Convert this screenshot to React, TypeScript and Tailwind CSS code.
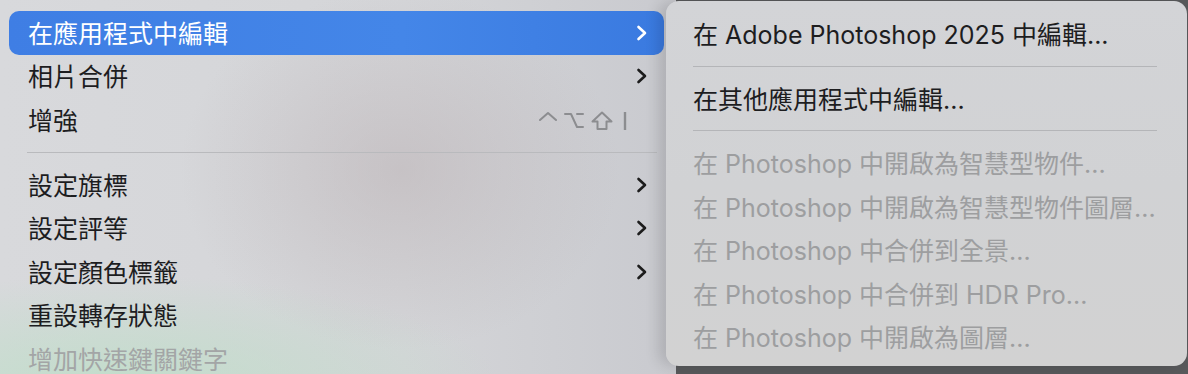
import React from "react";

const font = { fontFamily: 'Inter, "Noto Sans CJK TC", sans-serif' };

type Item = { label: string; sub?: boolean; shortcut?: boolean; disabled?: boolean; active?: boolean; sep?: boolean };

const mainItems: Item[] = [
  { label: "在應用程式中編輯", sub: true, active: true },
  { label: "相片合併", sub: true },
  { label: "增強", shortcut: true },
  { label: "", sep: true },
  { label: "設定旗標", sub: true },
  { label: "設定評等", sub: true },
  { label: "設定顏色標籤", sub: true },
  { label: "重設轉存狀態" },
  { label: "增加快速鍵關鍵字", disabled: true },
];

const subItems: Item[] = [
  { label: "在 Adobe Photoshop 2025 中編輯..." },
  { label: "", sep: true },
  { label: "在其他應用程式中編輯..." },
  { label: "", sep: true },
  { label: "在 Photoshop 中開啟為智慧型物件...", disabled: true },
  { label: "在 Photoshop 中開啟為智慧型物件圖層...", disabled: true },
  { label: "在 Photoshop 中合併到全景...", disabled: true },
  { label: "在 Photoshop 中合併到 HDR Pro...", disabled: true },
  { label: "在 Photoshop 中開啟為圖層...", disabled: true },
];

const Chevron = ({ white }: { white?: boolean }) => (
  <svg width="12" height="16" viewBox="0 0 12 16" fill="none">
    <path
      d="M2.5 2 L9 8 L2.5 14"
      stroke={white ? "#ffffff" : "#1c1c1c"}
      strokeWidth="2.6"
      strokeLinecap="round"
      strokeLinejoin="round"
    />
  </svg>
);

const Shortcut = () => (
  <svg width="90" height="22" viewBox="0 0 90 22" fill="none" stroke="#8c8d90" strokeWidth="2" strokeLinejoin="round">
    {/* control */}
    <path d="M1 10 L9 3 L17 10" strokeLinecap="round" />
    {/* option */}
    <path d="M26 4 H32 L38 17 H44 M38 4 H44" strokeLinecap="round" />
    {/* shift */}
    <path d="M63 2.5 L53.5 11.5 H58.5 V19 H67.5 V11.5 H72.5 Z" />
    {/* bar */}
    <path d="M86 2 V20" strokeWidth="2.4" />
  </svg>
);

const MainMenu = () => (
  <div className="w-[676px] h-full flex flex-col bg-[radial-gradient(ellipse_220px_180px_at_400px_170px,rgba(185,175,178,0.5),transparent),radial-gradient(ellipse_380px_110px_at_120px_385px,rgba(190,222,200,0.85),transparent),linear-gradient(90deg,#d8d9dc,#d4d5d8_60%,#c9cacf)]">
    <div className="h-[2px] ml-[24px] bg-[#b5b6b9]" />
    <div className="flex flex-col pt-[11px] pl-[9px] pr-[12px]">
      {mainItems.map((it, i) =>
        it.sep ? (
          <div key={i} className="h-[21px] flex items-center pl-[18px] pr-[7px]">
            <div className="h-px w-full bg-[#b9babd]" />
          </div>
        ) : (
          <div
            key={i}
            className={
              "h-[43.6px] flex items-center pl-[19px] pr-[16px] rounded-[10px] text-[25px] leading-none " +
              (it.active
                ? "bg-[linear-gradient(90deg,#3f7ee4,#4486e8_60%,#3a7ae0)] text-white"
                : it.disabled
                ? "text-[#a3a5a6]"
                : "text-[#1d1d1f]")
            }
          >
            <span className="flex-1 pt-[3px]">{it.label}</span>
            {it.shortcut && (
              <span className="mr-[19px] pt-[3px]">
                <Shortcut />
              </span>
            )}
            {it.sub && <Chevron white={it.active} />}
          </div>
        )
      )}
    </div>
  </div>
);

const SubMenu = () => (
  <div className="absolute left-[666px] top-[1px] w-[521px] h-[365px] rounded-[13px] bg-[linear-gradient(180deg,#d3d4d7,#d1d2d4_50%,#d2d2d2)] shadow-[-8px_0_14px_rgba(0,0,0,0.13)] flex flex-col pt-[11px] pl-[27px] pr-[30px]">
    {subItems.map((it, i) =>
      it.sep ? (
        <div key={i} className="h-[21px] flex items-center">
          <div className="h-px w-full bg-[#b4b5b8]" />
        </div>
      ) : (
        <div
          key={i}
          className={
            "h-[43.5px] flex items-center text-[25px] leading-none whitespace-nowrap pt-[4px] " +
            (it.disabled ? "text-[#9d9ea0]" : "text-[#1d1d1f]")
          }
        >
          {it.label}
        </div>
      )
    )}
  </div>
);

export default function App() {
  return (
    <div className="relative w-[1188px] h-[374px] overflow-hidden bg-[#58595b] flex" style={font}>
      <MainMenu />
      <SubMenu />
    </div>
  );
}
